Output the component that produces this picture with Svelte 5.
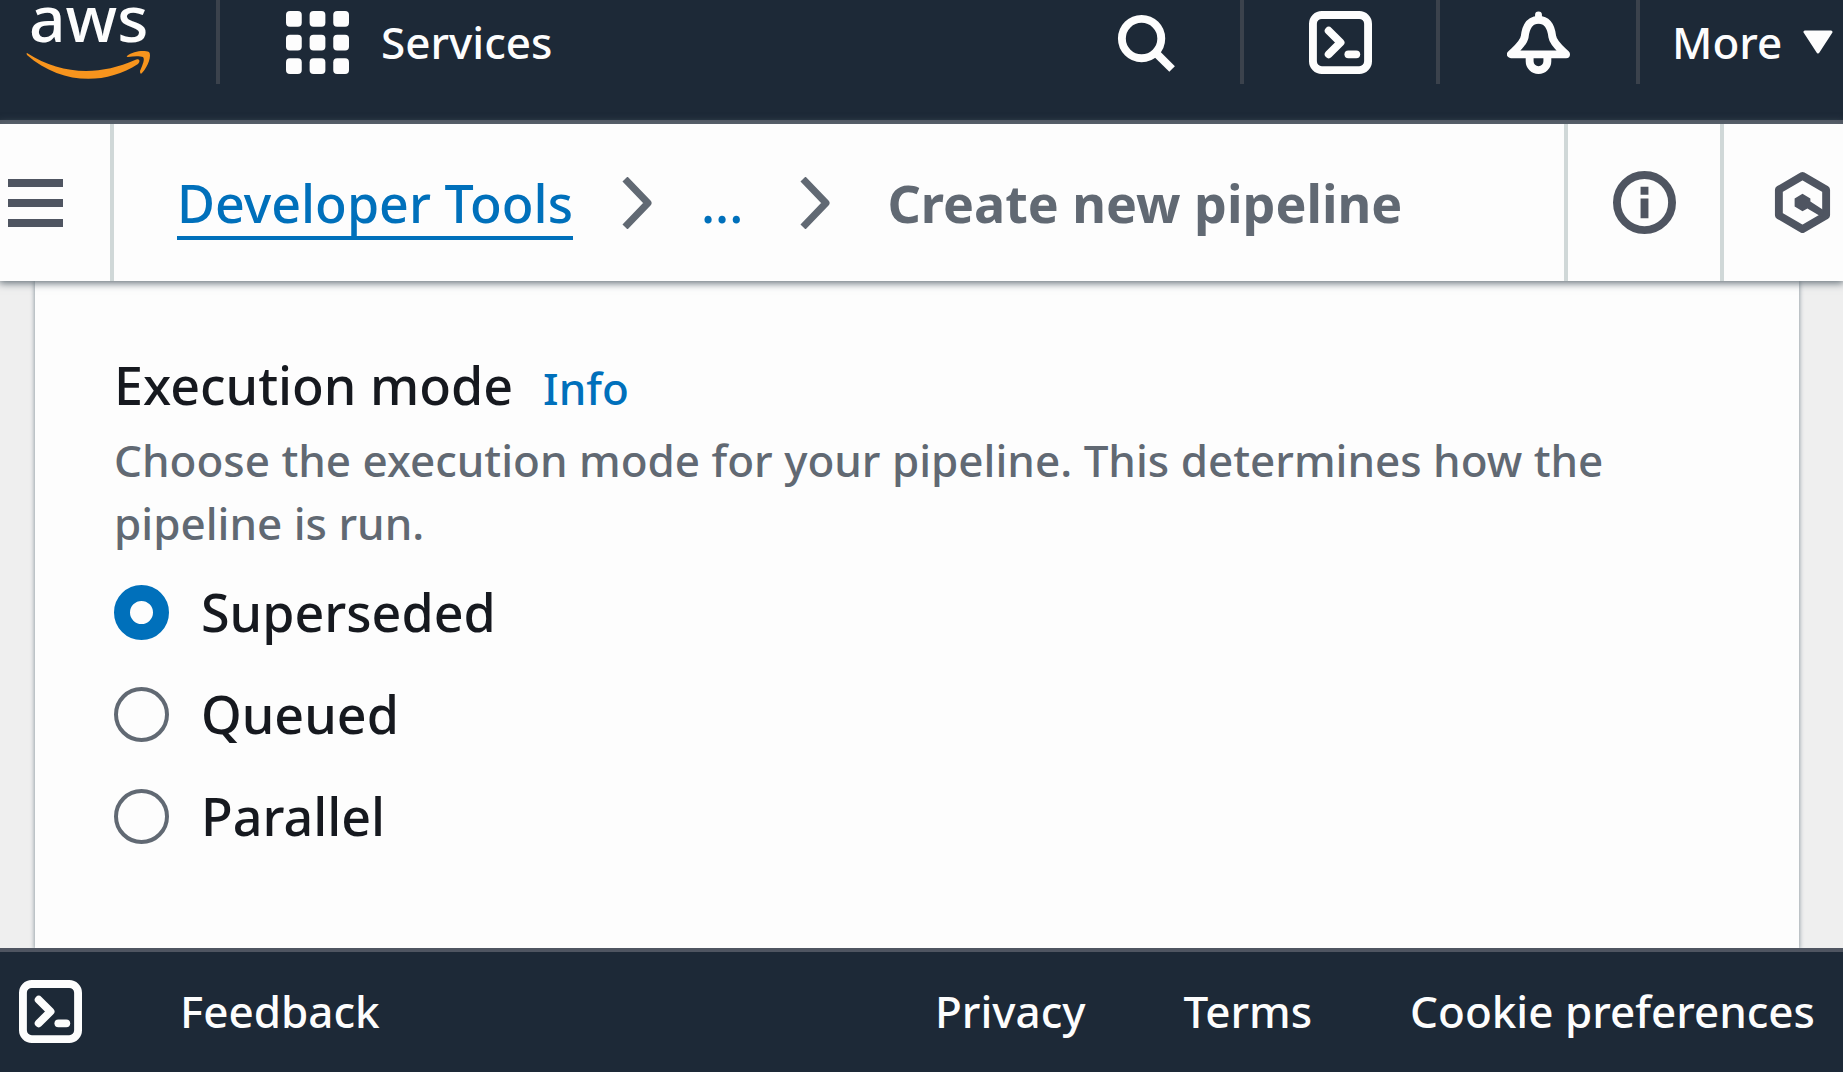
<script>
  const modes = ['Superseded', 'Queued', 'Parallel'];
  let selected = $state('Superseded');
</script>

{#snippet terminal()}
  <svg class="icon" viewBox="0 0 64 64" aria-hidden="true">
    <rect x="4" y="4" width="56" height="56" rx="9" fill="none" stroke="currentColor" stroke-width="8" />
    <path d="M20 20 L32 32 L20 44" fill="none" stroke="currentColor" stroke-width="8" stroke-linecap="round" stroke-linejoin="round" />
    <path d="M40 44 H48" stroke="currentColor" stroke-width="8" stroke-linecap="round" />
  </svg>
{/snippet}

{#snippet chevron()}
  <svg class="chevron" viewBox="0 0 32 52" aria-hidden="true">
    <path d="M4 2 L27 26 L4 50" fill="none" stroke="currentColor" stroke-width="7" stroke-linejoin="round" />
  </svg>
{/snippet}

<div class="page">
  <header>
    <a class="logo" href="#home" aria-label="AWS home">
      <svg viewBox="0 0 130 85" aria-hidden="true">
        <text x="2" y="42">aws</text>
        <path d="M0 53 C34 75 72 76 108 60 C112 58 114 61 111 64 C77 86 33 84 0 55 Q-1 53 0 53 Z" fill="#f7941d" />
        <path d="M100 56 C106 51 117 50 122 52 C125 55 121 67 115 73 Q113 75 113 71 C116 64 118 59 116 57 C113 56 107 56 101 57 Q99 57 100 56 Z" fill="#f7941d" />
      </svg>
    </a>
    <button class="services">
      <svg class="icon" viewBox="0 0 64 64" aria-hidden="true">
        {#each [0, 24, 48] as y}
          {#each [0, 24, 48] as x}
            <rect {x} {y} width="16" height="16" rx="4" fill="currentColor" />
          {/each}
        {/each}
      </svg>
      Services
    </button>
    <button class="tool search" aria-label="Search">
      <svg class="icon" viewBox="0 0 64 64" aria-hidden="true">
        <circle cx="27" cy="28" r="20" fill="none" stroke="currentColor" stroke-width="8" />
        <path d="M41 42 L58 59" stroke="currentColor" stroke-width="8" />
      </svg>
    </button>
    <button class="tool ruled" aria-label="CloudShell">{@render terminal()}</button>
    <button class="tool ruled bell" aria-label="Notifications">
      <svg class="icon" viewBox="0 0 64 64" aria-hidden="true">
        <path d="M32 4 V9" stroke="currentColor" stroke-width="7" stroke-linecap="round" />
        <path d="M32 9 C22 9 19 17 18 26 C17 33 9 39 4 44 H60 C55 39 47 33 46 26 C45 17 42 9 32 9 Z" fill="none" stroke="currentColor" stroke-width="8" stroke-linejoin="round" />
        <path d="M23 46 V51 A9 9 0 0 0 41 51 V46" fill="none" stroke="currentColor" stroke-width="8" />
      </svg>
    </button>
    <button class="more ruled">
      More
      <svg class="caret" viewBox="0 0 30 24" aria-hidden="true">
        <path d="M2 2 H28 L15 22 Z" fill="currentColor" stroke="currentColor" stroke-width="3" stroke-linejoin="round" />
      </svg>
    </button>
  </header>

  <div class="crumbbar">
    <button class="menu" aria-label="Open navigation">
      <svg viewBox="0 0 55 48" aria-hidden="true">
        <path d="M0 4 H55 M0 24 H55 M0 44 H55" stroke="currentColor" stroke-width="8" />
      </svg>
    </button>
    <nav aria-label="Breadcrumbs">
      <a class="root" href="#developer-tools">Developer Tools</a>
      {@render chevron()}
      <a class="dots" href="#path">...</a>
      {@render chevron()}
      <span class="current" aria-current="page">Create new pipeline</span>
    </nav>
    <button class="side" aria-label="Info panel">
      <svg class="icon" viewBox="0 0 64 64" aria-hidden="true">
        <circle cx="32" cy="32" r="28" fill="none" stroke="currentColor" stroke-width="8" />
        <path d="M32 16 V24 M32 28 V48" stroke="currentColor" stroke-width="8" />
      </svg>
    </button>
    <button class="side last" aria-label="Resources">
      <svg class="icon" viewBox="0 0 64 64" aria-hidden="true">
        <path d="M32 5 L56 19 V45 L32 59 L8 45 V19 Z" fill="none" stroke="currentColor" stroke-width="8" stroke-linejoin="round" />
        <path d="M32 23 L40 28 V31 L54 40 L52 47 L37 38 L32 41 L24 36 V28 Z" fill="currentColor" />
      </svg>
    </button>
  </div>

  <main>
    <section class="panel">
      <div class="heading">
        <h2 id="mode-title">Execution mode</h2>
        <a href="#info">Info</a>
      </div>
      <p id="mode-help">Choose the execution mode for your pipeline. This determines how the pipeline is run.</p>
      <div class="options" role="radiogroup" aria-labelledby="mode-title" aria-describedby="mode-help">
        {#each modes as mode}
          <label>
            <input type="radio" name="mode" value={mode} bind:group={selected} />
            {mode}
          </label>
        {/each}
      </div>
    </section>
  </main>

  <footer>
    <button class="shell" aria-label="CloudShell">{@render terminal()}</button>
    <a class="feedback" href="#feedback">Feedback</a>
    <a href="#privacy">Privacy</a>
    <a href="#terms">Terms</a>
    <a href="#cookies">Cookie preferences</a>
  </footer>
</div>

<style>
  :global(body) {
    margin: 0;
    background: #efefef;
  }
  .page {
    min-height: 100vh;
    display: flex;
    flex-direction: column;
    font-family: 'Noto Sans', 'Open Sans', sans-serif;
    font-weight: 500;
    font-size: 44px;
    line-height: 63px;
    color: #16191f;
    overflow: hidden;
  }
  button {
    margin: 0;
    padding: 0;
    border: 0;
    background: none;
    font: inherit;
    color: inherit;
    display: flex;
    align-items: center;
    white-space: nowrap;
  }
  a {
    color: #0070bb;
    text-decoration: none;
    white-space: nowrap;
  }
  svg {
    display: block;
    flex: none;
  }
  .icon {
    width: 63px;
    height: 63px;
  }

  header {
    display: flex;
    align-items: flex-start;
    height: 120px;
    background: #1d2937;
    border-bottom: 4px solid #4f5561;
    color: #fdfdfd;
  }
  header button {
    height: 84px;
  }
  .logo {
    box-sizing: border-box;
    width: 220px;
    height: 84px;
    padding-left: 27px;
    border-right: 4px solid #3b424c;
  }
  .logo svg {
    width: 130px;
    height: 85px;
    overflow: visible;
  }
  .logo text {
    font-size: 64px;
    fill: #fdfdfd;
  }
  .services {
    gap: 32px;
    padding-left: 66px;
    margin-right: auto;
  }
  .tool {
    box-sizing: border-box;
    width: 196px;
    justify-content: center;
  }
  .search {
    width: 188px;
  }
  .bell {
    width: 200px;
  }
  .ruled {
    border-left: 4px solid #3b424c;
  }
  .more {
    box-sizing: border-box;
    width: 207px;
    padding: 0 10px 0 32px;
    justify-content: space-between;
  }
  .caret {
    width: 30px;
    height: 24px;
  }

  .crumbbar {
    position: relative;
    display: flex;
    height: 157px;
    background: #fdfdfd;
    color: #4f5561;
    box-shadow: 0 1px 8px 1px #5f6b73;
  }
  .menu {
    box-sizing: border-box;
    width: 114px;
    padding-left: 8px;
    border-right: 4px solid #d0d8d8;
  }
  .menu svg {
    width: 55px;
    height: 48px;
  }
  nav {
    flex: 1;
    min-width: 0;
    display: flex;
    align-items: center;
    gap: 48px;
    padding-left: 63px;
    font-size: 52px;
    color: #616973;
  }
  .root {
    border-bottom: 4px solid #0070bb;
    padding: 6px 0 2px;
  }
  .chevron {
    width: 32px;
    height: 52px;
  }
  .dots {
    padding-right: 8px;
  }
  .current {
    padding-left: 8px;
    font-weight: 700;
    white-space: nowrap;
  }
  .side {
    box-sizing: border-box;
    width: 156px;
    justify-content: center;
    border-left: 4px solid #d0d8d8;
  }
  .last {
    width: 123px;
    justify-content: flex-end;
    padding-right: 9px;
  }

  main {
    flex: 1;
    display: flex;
    padding: 0 44px 0 35px;
  }
  .panel {
    flex: 1;
    padding: 68px 79px;
    background: #fdfdfd;
    box-shadow: 0 0 4px 1px #9aa5ab;
  }
  .heading {
    display: flex;
    align-items: baseline;
    gap: 30px;
  }
  h2 {
    margin: 0;
    font-size: 52px;
    font-weight: 500;
    line-height: 72px;
  }
  p {
    margin: 8px 0 0;
    color: #616973;
  }
  .options {
    display: flex;
    flex-direction: column;
    gap: 30px;
    padding-top: 21px;
  }
  label {
    display: flex;
    align-items: center;
    gap: 32px;
    font-size: 52px;
    line-height: 72px;
  }
  input {
    appearance: none;
    box-sizing: border-box;
    flex: none;
    width: 55px;
    height: 55px;
    margin: 0;
    border: 4px solid #616973;
    border-radius: 50%;
  }
  input:checked {
    border: 16px solid #0070bb;
  }

  footer {
    position: relative;
    display: flex;
    align-items: center;
    gap: 98px;
    height: 118px;
    padding: 0 28px 2px 19px;
    background: #1d2937;
    border-top: 4px solid #4f5561;
    color: #fdfdfd;
  }
  footer a {
    color: inherit;
  }
  .feedback {
    margin-right: auto;
  }
</style>
